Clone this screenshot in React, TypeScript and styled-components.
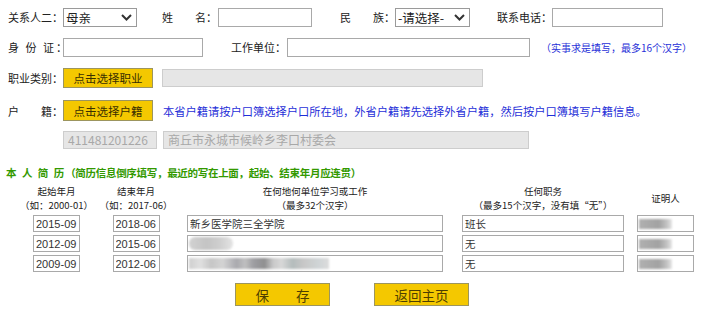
import { FC } from "react";
import styled, { createGlobalStyle, css } from "styled-components";

const GlobalStyle = createGlobalStyle`
  html, body {
    margin: 0;
    padding: 0;
    background: #fff;
  }
  body {
    font-family: "Noto Sans CJK SC", "Liberation Sans", sans-serif;
    font-size: 11px;
    color: #222;
  }
`;

const resume = [
  { start: "2015-09", end: "2018-06", place: "新乡医学院三全学院", duty: "班长", blur: "" },
  { start: "2012-09", end: "2015-06", place: "", duty: "无", blur: "blob" },
  { start: "2009-09", end: "2012-06", place: "", duty: "无", blur: "strip" },
];

const App: FC = () => {
  return (
    <>
      <GlobalStyle />
      <Page>
        <Row $top={7} $height={20}>
          <Label>关系人二：</Label>
          <SelectWrap $width={74}>
            <Select defaultValue="母亲">
              <option>母亲</option>
              <option>父亲</option>
            </Select>
            <Chevron />
          </SelectWrap>
          <Label $ml={25}>姓　　名：</Label>
          <TextInput $width={94} $ml={1} />
          <Label $ml={28}>民　　族：</Label>
          <SelectWrap $width={75}>
            <Select defaultValue="-请选择-">
              <option>-请选择-</option>
            </Select>
            <Chevron />
          </SelectWrap>
          <Label $ml={27}>联系电话：</Label>
          <TextInput $width={111} />
        </Row>

        <Row $top={10} $height={20}>
          <Label $spacing={2}>身 份 证：</Label>
          <TextInput $width={140} />
          <Label $ml={28}>工作单位：</Label>
          <TextInput $width={243} $ml={1} />
          <Note $ml={11} $size={10}>（实事求是填写，最多16个汉字）</Note>
        </Row>

        <Row $top={11} $height={20}>
          <Label>职业类别：</Label>
          <PickButton>点击选择职业</PickButton>
          <GrayBox $width={321} $ml={9} />
        </Row>

        <Row $top={12} $height={21}>
          <Label>户　　籍：</Label>
          <PickButton>点击选择户籍</PickButton>
          <Note $ml={10} $size={11.25}>
            本省户籍请按户口簿选择户口所在地，外省户籍请先选择外省户籍，然后按户口簿填写户籍信息。
          </Note>
        </Row>

        <Row $top={9} $height={20}>
          <Spacer />
          <GrayBox $width={94}>411481201226</GrayBox>
          <GrayBox $width={366} $ml={6}>商丘市永城市候岭乡李口村委会</GrayBox>
        </Row>

        <Title>
          本 人 简 历<span>（简历信息倒序填写，最近的写在上面，起始、结束年月应连贯）</span>
        </Title>

        <Resume>
          <Head><HeadLine>起始年月</HeadLine><HeadLine>（如：2000-01）</HeadLine></Head>
          <Head><HeadLine>结束年月</HeadLine><HeadLine>（如：2017-06）</HeadLine></Head>
          <Head><HeadLine>在何地何单位学习或工作</HeadLine><HeadLine>（最多32个汉字）</HeadLine></Head>
          <Head><HeadLine>任何职务</HeadLine><HeadLine>（最多15个汉字，没有填“无”）</HeadLine></Head>
          <Head><HeadLine>证明人</HeadLine></Head>

          {resume.map((r) => (
            <ResumeRow key={r.start}>
              <Cell><DateInput defaultValue={r.start} /></Cell>
              <Cell><DateInput defaultValue={r.end} /></Cell>
              <Cell>
                {r.blur ? (
                  <FakeBox $width={256}>
                    <Blur $kind={r.blur} />
                  </FakeBox>
                ) : (
                  <CellInput $width={256} defaultValue={r.place} />
                )}
              </Cell>
              <Cell><CellInput $width={162} defaultValue={r.duty} /></Cell>
              <Cell>
                <FakeBox $width={57}>
                  <Blur $kind="witness" />
                </FakeBox>
              </Cell>
            </ResumeRow>
          ))}
        </Resume>

        <Actions>
          <BigButton>保　　存</BigButton>
          <BigButton>返回主页</BigButton>
        </Actions>
      </Page>
    </>
  );
};

export default App;

const Chevron: FC = () => (
  <ChevronSvg width="11" height="7" viewBox="0 0 11 7">
    <polyline points="1,1 5.5,5.5 10,1" fill="none" stroke="#333" strokeWidth="2" />
  </ChevronSvg>
);

// styled-components
const Page = styled.div`
  width: 718px;
  height: 325px;
  padding-left: 8px;
  box-sizing: border-box;
  overflow: hidden;
`;

const Row = styled.div<{ $top: number; $height: number }>`
  display: flex;
  align-items: center;
  margin-top: ${(p) => p.$top}px;
  height: ${(p) => p.$height}px;
`;

const Label = styled.div<{ $ml?: number; $spacing?: number }>`
  flex: none;
  width: 55px;
  margin-left: ${(p) => p.$ml || 0}px;
  letter-spacing: ${(p) => p.$spacing || 0}px;
  white-space: nowrap;
  font-size: 11px;
  line-height: 14px;
  color: #222;
`;

const Spacer = styled.div`
  width: 55px;
  flex: none;
`;

const boxBase = css`
  box-sizing: border-box;
  border: 1px solid #a9a9a9;
  background: #fff;
  outline: none;
  margin: 0;
`;

const TextInput = styled.input<{ $width: number; $ml?: number }>`
  ${boxBase};
  width: ${(p) => p.$width}px;
  height: 19px;
  margin-left: ${(p) => p.$ml || 0}px;
  padding: 0 2px;
`;

const SelectWrap = styled.div<{ $width: number }>`
  position: relative;
  width: ${(p) => p.$width}px;
  height: 19px;
  flex: none;
`;

const Select = styled.select`
  ${boxBase};
  appearance: none;
  width: 100%;
  height: 100%;
  padding: 0 0 0 2px;
  border-color: #9a9a9a;
  font-family: "Noto Sans CJK SC", sans-serif;
  font-size: 12.5px;
  color: #222;
  line-height: 17px;
`;

const ChevronSvg = styled.svg`
  position: absolute;
  right: 5px;
  top: 6px;
  pointer-events: none;
`;

const Note = styled.div<{ $ml: number; $size: number }>`
  margin-left: ${(p) => p.$ml}px;
  font-size: ${(p) => p.$size}px;
  color: #1f2fd8;
  white-space: nowrap;
`;

const PickButton = styled.button`
  flex: none;
  box-sizing: border-box;
  width: 90px;
  height: 100%;
  margin: 0;
  padding: 0;
  background: #f4c800;
  border: 1px solid #9c955e;
  font-family: "Noto Sans CJK SC", sans-serif;
  font-size: 11.5px;
  color: #3a2f00;
  cursor: pointer;
`;

const GrayBox = styled.div<{ $width: number; $ml?: number }>`
  flex: none;
  box-sizing: border-box;
  width: ${(p) => p.$width}px;
  height: 18px;
  margin-left: ${(p) => p.$ml || 0}px;
  padding: 0 4px;
  background: #e6e6e6;
  border: 1px solid #cdcdcd;
  font-family: "Noto Sans CJK SC", "Liberation Sans", sans-serif;
  font-size: 12px;
  line-height: 16px;
  color: #a8a8a8;
  white-space: nowrap;
`;

const Title = styled.div`
  margin: 16px 0 0 -2px;
  height: 14px;
  line-height: 14px;
  font-size: 10.5px;
  font-weight: bold;
  color: #339900;
  letter-spacing: 1px;
  white-space: nowrap;
  word-spacing: 1px;

  span {
    letter-spacing: -0.3px;
  }
`;

const Resume = styled.div`
  display: grid;
  grid-template-columns: 81px 78px 280px 176px 69px;
  grid-auto-rows: 17px;
  grid-template-rows: 28px;
  row-gap: 3px;
  margin: 4px 0 0 8px;
`;

const Head = styled.div`
  display: flex;
  flex-direction: column;
  align-items: center;
  justify-content: center;
  text-align: center;
  color: #222;
  white-space: nowrap;
`;

const HeadLine = styled.div`
  font-size: 9.5px;
  line-height: 14px;
  height: 14px;
`;

const ResumeRow = styled.div`
  display: contents;
`;

const Cell = styled.div`
  display: flex;
  justify-content: center;
  align-items: center;
`;

const DateInput = styled.input`
  ${boxBase};
  width: 47px;
  height: 17px;
  padding: 0 2px;
  font-family: "Liberation Sans", sans-serif;
  font-size: 11px;
  color: #333;
`;

const CellInput = styled.input<{ $width: number }>`
  ${boxBase};
  width: ${(p) => p.$width}px;
  height: 17px;
  padding: 0 2px;
  font-family: "Noto Sans CJK SC", sans-serif;
  font-size: 10.5px;
  color: #333;
`;

const FakeBox = styled.div<{ $width: number }>`
  ${boxBase};
  width: ${(p) => p.$width}px;
  height: 17px;
  display: flex;
  align-items: center;
  overflow: hidden;
`;

const blurKinds: Record<string, string> = {
  blob: `
    width: 44px; height: 13px; margin-left: 1px; border-radius: 6px;
    background: linear-gradient(90deg, #d2d2d2, #c4c4c4 40%, #cfcfcf 70%, #e4e4e4);
  `,
  strip: `
    width: 140px; height: 11px; margin-left: 1px;
    background: linear-gradient(90deg, #cfcfcf 0%, #e0e0e0 8%, #c6c6c6 16%, #d4d4d4 24%,
      #a9a9ae 34%, #c0c0c0 40%, #9e9ea2 46%, #8f8f90 54%, #c8c8c8 60%, #d8d8d8 66%,
      #b4bcbc 74%, #c8c8c8 82%, #cfd4d6 92%, #dcdcdc 100%);
  `,
  witness: `
    width: 33px; height: 10px; margin-left: 1px;
    background: linear-gradient(90deg, #b0b0b0, #a2a2a2 60%, #c4c4c4 85%, #e6e6e6);
  `,
};

const Blur = styled.span<{ $kind: string }>`
  display: block;
  flex: none;
  filter: blur(1.2px);
  ${(p) => blurKinds[p.$kind]};
`;

const Actions = styled.div`
  display: flex;
  gap: 44px;
  margin: 11px 0 0 227px;
`;

const BigButton = styled.button`
  box-sizing: border-box;
  width: 95px;
  height: 23px;
  margin: 0;
  padding: 0;
  background: #f4c800;
  border: 1px solid #9c955e;
  font-family: "Noto Sans CJK SC", sans-serif;
  font-size: 13.5px;
  color: #4d3e00;
  cursor: pointer;
`;
